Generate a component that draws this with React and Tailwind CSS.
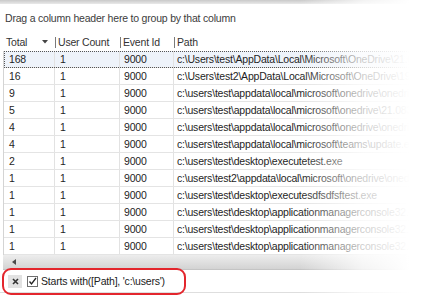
import React from "react";

const rows = [
  ["168", "1", "9000", "c:\\Users\\test\\AppData\\Local\\Microsoft\\OneDrive\\21.083.0425.0003\\FileSyncShell64.dll"],
  ["16", "1", "9000", "c:\\Users\\test2\\AppData\\Local\\Microsoft\\OneDrive\\19.232.1124.0012\\FileSyncShell64.dll"],
  ["9", "1", "9000", "c:\\users\\test\\appdata\\local\\microsoft\\onedrive\\onedrive.exe"],
  ["5", "1", "9000", "c:\\users\\test\\appdata\\local\\microsoft\\onedrive\\21.083.0425.0003\\filesync.dll"],
  ["4", "1", "9000", "c:\\users\\test\\appdata\\local\\microsoft\\onedrive\\onedrivestandaloneupdater.exe"],
  ["4", "1", "9000", "c:\\users\\test\\appdata\\local\\microsoft\\teams\\update.exe"],
  ["2", "1", "9000", "c:\\users\\test\\desktop\\executetest.exe"],
  ["1", "1", "9000", "c:\\users\\test2\\appdata\\local\\microsoft\\onedrive\\onedrive.exe"],
  ["1", "1", "9000", "c:\\users\\test\\desktop\\executesdfsdfsftest.exe"],
  ["1", "1", "9000", "c:\\users\\test\\desktop\\applicationmanagerconsole32.exe"],
  ["1", "1", "9000", "c:\\users\\test\\desktop\\applicationmanagerconsole32.exe"],
  ["1", "1", "9000", "c:\\users\\test\\desktop\\applicationmanagerconsole32.exe"],
];

function HeaderCell({ w, label, sep, children }) {
  return (
    <div className={`${w} h-full flex items-center shrink-0`}>
      {sep && <div className="w-px h-[11px] bg-[#7a7a7a] mr-[2px]" />}
      <span className={sep ? "" : "pl-[3px]"}>{label}</span>
      {children}
    </div>
  );
}

export default function App() {
  return (
    <div className="relative w-[437px] h-[297px] bg-white overflow-hidden font-['Liberation_Sans',Arial,sans-serif] text-[10.5px] tracking-[-0.2px] text-[#1e1e1e] leading-none">
      <div className="h-[4px] bg-gradient-to-b from-[#c9c9c9] to-[#e9e9e9]" />
      <div className="h-[29px] flex items-center pl-[5px] text-[#3c3c3c]">
        Drag a column header here to group by that column
      </div>

      <div className="ml-[3px]">
        <div className="h-[18px] flex items-center text-[#333]">
          <div className="w-[52px] h-full flex items-center shrink-0 pl-[3px]">
            <span>Total</span>
            <svg width="6" height="4" viewBox="0 0 6 4" className="ml-[15px]">
              <path d="M0 0 L6 0 L3 3.5 Z" fill="#444" />
            </svg>
          </div>
          <HeaderCell w="w-[65px]" label="User Count" sep />
          <HeaderCell w="w-[54px]" label="Event Id" sep />
          <HeaderCell w="flex-1" label="Path" sep />
        </div>

        <div className="border-l border-[#d4d4d4]">
          {rows.map((r, i) => (
            <div
              key={i}
              className={`h-[17px] flex items-center border-b border-[#e4e4e4] ${
                i === 0 ? "bg-[#eef3fa] outline outline-1 outline-dotted outline-[#555] -outline-offset-1" : ""
              }`}
            >
              <div className="w-[51px] h-full flex items-center pl-[5px] border-r border-[#e2e2e2] shrink-0">{r[0]}</div>
              <div className="w-[65px] h-full flex items-center pl-[5px] border-r border-[#e2e2e2] shrink-0">{r[1]}</div>
              <div className="w-[54px] h-full flex items-center pl-[4px] border-r border-[#e2e2e2] shrink-0">{r[2]}</div>
              <div className="flex-1 h-full flex items-center pl-[3px] whitespace-nowrap overflow-hidden">{r[3]}</div>
            </div>
          ))}
        </div>

        <div className="h-[15px] flex items-center bg-gradient-to-b from-[#ededed] to-[#d3d3d3] border-b border-[#c4c4c4]">
          <svg width="12" height="8" viewBox="0 0 12 8" className="ml-[6px]">
            <path d="M7 1 L3 4 L7 7 Z" fill="#4a4a4a" />
          </svg>
        </div>
      </div>

      <div className="h-[22px] flex items-center border-b border-[#dedede] mt-[1px]">
        <div className="ml-[8px] w-[14px] h-[13px] bg-[#e2e2e2] flex items-center justify-center">
          <svg width="7" height="7" viewBox="0 0 7 7">
            <path d="M1 1 L6 6 M6 1 L1 6" stroke="#333" strokeWidth="1.6" />
          </svg>
        </div>
        <div className="ml-[5px] w-[11px] h-[11px] border border-[#6f6f6f] bg-white flex items-center justify-center">
          <svg width="9" height="9" viewBox="0 0 9 9">
            <path d="M1.5 4.5 L3.5 7 L8 1" stroke="#222" strokeWidth="1.3" fill="none" />
          </svg>
        </div>
        <span className="ml-[3px] text-[#222]">Starts with([Path], 'c:\users')</span>
      </div>

      <div className="pointer-events-none absolute top-0 right-0 h-full w-[137px] bg-gradient-to-r from-white/0 from-0% via-white/75 via-45% to-white to-80%" />

      <div className="pointer-events-none absolute left-[2px] top-[268px] w-[184px] h-[27px] border-2 border-[#e3262d] rounded-[9px]" />
    </div>
  );
}
